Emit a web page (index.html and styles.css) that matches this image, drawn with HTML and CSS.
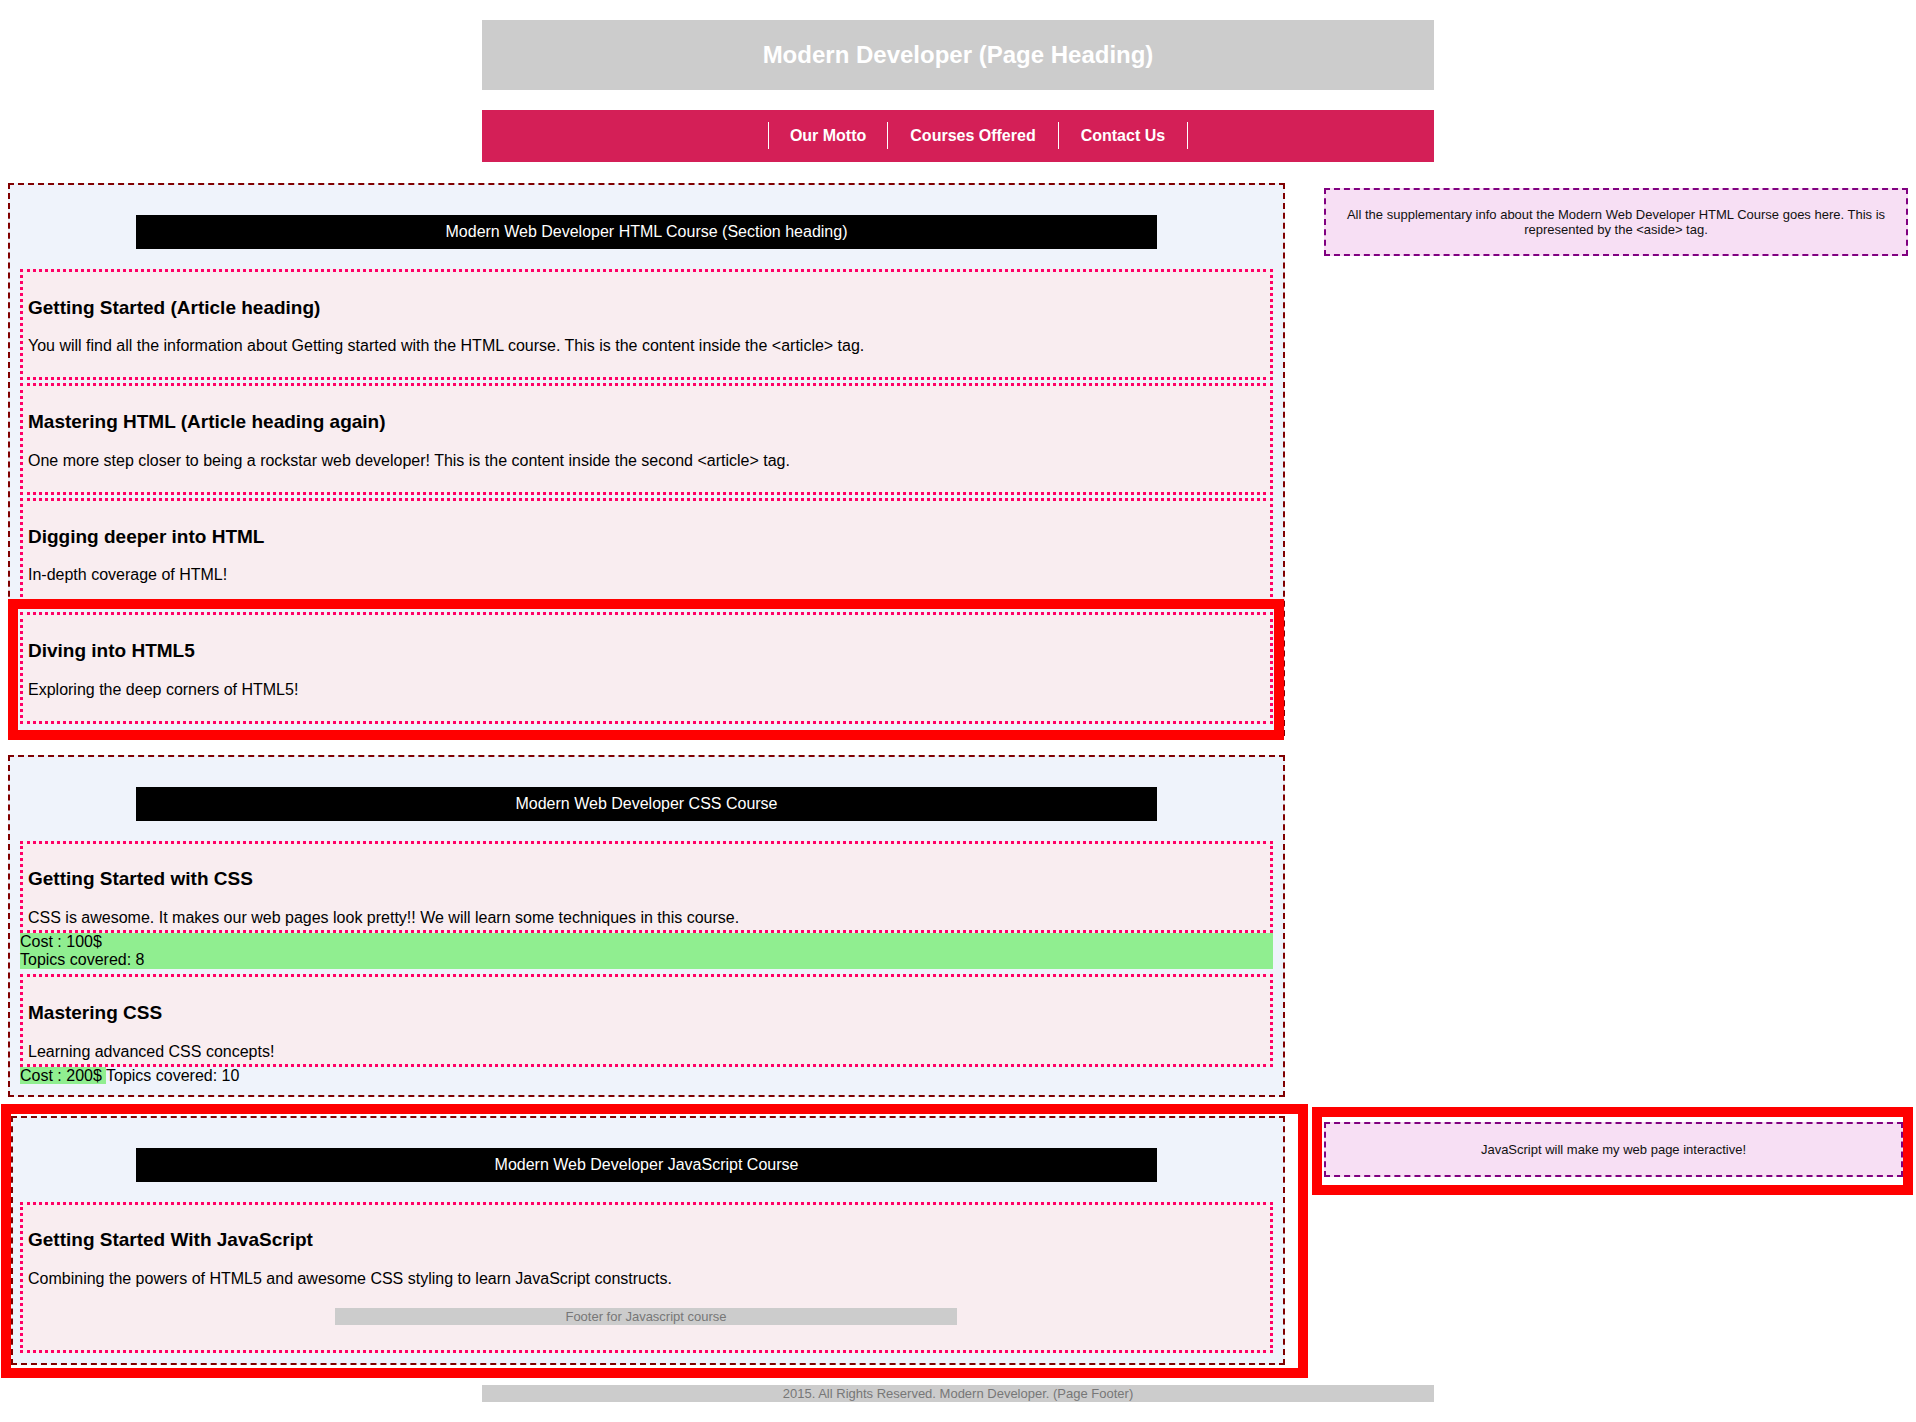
FILE: index.html
```html
<!DOCTYPE html>
<html lang="en">
<head>
<meta charset="utf-8">
<title>Modern Developer</title>
<link rel="stylesheet" href="styles.css">
</head>
<body>
<header class="page-header">
  <h1 class="page-title">Modern Developer (Page Heading)</h1>
</header>
<nav class="main-nav">
  <ul class="nav-list">
    <li class="nav-item"><a class="nav-link" href="#">Our Motto</a></li>
    <li class="nav-item"><a class="nav-link" href="#">Courses Offered</a></li>
    <li class="nav-item"><a class="nav-link" href="#">Contact Us</a></li>
  </ul>
</nav>

<div class="row">
  <section class="course">
    <h2 class="course-title">Modern Web Developer HTML Course (Section heading)</h2>
    <article class="lesson">
      <h3 class="lesson-title">Getting Started (Article heading)</h3>
      <p class="lesson-text">You will find all the information about Getting started with the HTML course. This is the content inside the &lt;article&gt; tag.</p>
    </article>
    <article class="lesson">
      <h3 class="lesson-title">Mastering HTML (Article heading again)</h3>
      <p class="lesson-text">One more step closer to being a rockstar web developer! This is the content inside the second &lt;article&gt; tag.</p>
    </article>
    <article class="lesson">
      <h3 class="lesson-title">Digging deeper into HTML</h3>
      <p class="lesson-text">In-depth coverage of HTML!</p>
    </article>
    <article class="lesson lesson-flag">
      <h3 class="lesson-title">Diving into HTML5</h3>
      <p class="lesson-text">Exploring the deep corners of HTML5!</p>
    </article>
  </section>
  <aside class="note">All the supplementary info about the Modern Web Developer HTML Course goes here. This is represented by the &lt;aside&gt; tag.</aside>
</div>

<div class="row">
  <section class="course">
    <h2 class="course-title">Modern Web Developer CSS Course</h2>
    <article class="lesson lesson-tight">
      <h3 class="lesson-title">Getting Started with CSS</h3>
      <p class="lesson-text">CSS is awesome. It makes our web pages look pretty!! We will learn some techniques in this course.</p>
    </article>
    <div class="cost-block">Cost : 100$<br>Topics covered: 8</div>
    <article class="lesson lesson-tight lesson-gap">
      <h3 class="lesson-title">Mastering CSS</h3>
      <p class="lesson-text">Learning advanced CSS concepts!</p>
    </article>
    <div class="cost-line"><span class="cost">Cost : 200$ </span>Topics covered: 10</div>
  </section>
</div>

<div class="row">
  <section class="course course-js">
    <h2 class="course-title">Modern Web Developer JavaScript Course</h2>
    <article class="lesson">
      <h3 class="lesson-title">Getting Started With JavaScript</h3>
      <p class="lesson-text">Combining the powers of HTML5 and awesome CSS styling to learn JavaScript constructs.</p>
      <footer class="lesson-footer">Footer for Javascript course</footer>
    </article>
  </section>
  <aside class="note note-js">JavaScript will make my web page interactive!</aside>
</div>

<footer class="page-footer">2015. All Rights Reserved. Modern Developer. (Page Footer)</footer>
</body>
</html>
```

FILE: styles.css
```css
html {
  margin: 0;
  padding: 0;
}

body {
  margin: 0;
  padding: 8px;
  font-family: "Liberation Sans", Arial, Helvetica, sans-serif;
  color: #000;
  background: #fff;
}

/* Page header */
.page-header {
  width: 952px;
  margin: 12px auto 0;
  background: #cccccc;
}

.page-title {
  margin: 0;
  padding: 21px 0;
  font-size: 24px;
  line-height: 28px;
  font-weight: bold;
  color: #fff;
  text-align: center;
}

/* Navigation */
.main-nav {
  width: 952px;
  margin: 20px auto 21px;
  background: #d41f57;
}

.nav-list {
  display: flex;
  justify-content: center;
  list-style: none;
  margin: 0;
  padding: 12px 0 13px 40px;
}

.nav-item {
  border-left: 1px solid #fff;
}

.nav-item:last-child {
  border-right: 1px solid #fff;
}

.nav-link {
  display: block;
  padding: 4px 22px;
  font-size: 16px;
  line-height: 19px;
  font-weight: bold;
  color: #fff;
  text-decoration: none;
}

.nav-item:first-child .nav-link {
  padding: 4px 21px;
}

/* Rows */
.row {
  display: flex;
  justify-content: space-between;
  align-items: flex-start;
  margin-bottom: 19px;
  overflow: visible;
}

/* Course sections */
.course {
  position: relative;
  box-sizing: border-box;
  width: 1277px;
  padding: 10px;
  border: 2px dashed #800000;
  background: #eff3fb;
}

.course-js {
  width: 1274px;
  margin-left: 3px;
  padding-left: 7px;
}

.course-js::after {
  content: "";
  position: absolute;
  left: -12px;
  top: -14px;
  right: -25px;
  bottom: -15px;
  border: 10px solid #ff0000;
  pointer-events: none;
}

.course-title {
  width: 80%;
  margin: 20px auto;
  padding: 8px 9px;
  background: #000;
  color: #fff;
  font-size: 16px;
  line-height: 18px;
  font-weight: normal;
  text-align: center;
}

/* Articles */
.lesson {
  position: relative;
  margin: 0 0 3px;
  padding: 6px 6px 6px 5px;
  border: 3px dotted #ff0066;
  background: #f9edf0;
}

.lesson:last-child {
  margin-bottom: 0;
}

.lesson-title {
  margin: 18.72px 0;
  font-size: 19px;
  font-weight: bold;
}

.lesson-text {
  margin: 16px 0;
  font-size: 16px;
}

.lesson-tight {
  padding-bottom: 3px;
  margin-bottom: 0;
}

.lesson-tight .lesson-text {
  margin-bottom: 0;
}

.lesson-gap {
  margin-top: 5px;
}

.lesson-flag::after {
  content: "";
  position: absolute;
  left: -15px;
  top: -16px;
  right: -14px;
  bottom: -19px;
  border: 10px solid #ff0000;
  pointer-events: none;
}

.lesson-footer {
  width: 50%;
  margin: 20px auto 19px;
  padding: 1px 2px;
  background: #cccccc;
  color: #777;
  font-size: 13px;
  line-height: 15px;
  text-align: center;
}

/* Cost info */
.cost-block {
  background: #90ee90;
  font-size: 16px;
}

.cost-line {
  font-size: 16px;
}

.cost {
  background: #90ee90;
}

/* Asides */
.note {
  position: relative;
  box-sizing: border-box;
  width: 584px;
  margin-top: 5px;
  padding: 17px 5px;
  border: 2px dashed #800080;
  background: #f7dff4;
  color: #111;
  font-size: 13px;
  line-height: 15px;
  text-align: center;
}

.note-js {
  width: 579px;
  margin-top: 6px;
  margin-right: 5px;
  padding: 18px 5px;
}

.note-js::after {
  content: "";
  position: absolute;
  left: -14px;
  top: -17px;
  right: -12px;
  bottom: -20px;
  border: 10px solid #ff0000;
  pointer-events: none;
}

/* Page footer */
.page-footer {
  width: 952px;
  margin: 20px auto 0;
  padding: 1px 0;
  background: #cccccc;
  color: #777;
  font-size: 13px;
  line-height: 15px;
  text-align: center;
}
```
